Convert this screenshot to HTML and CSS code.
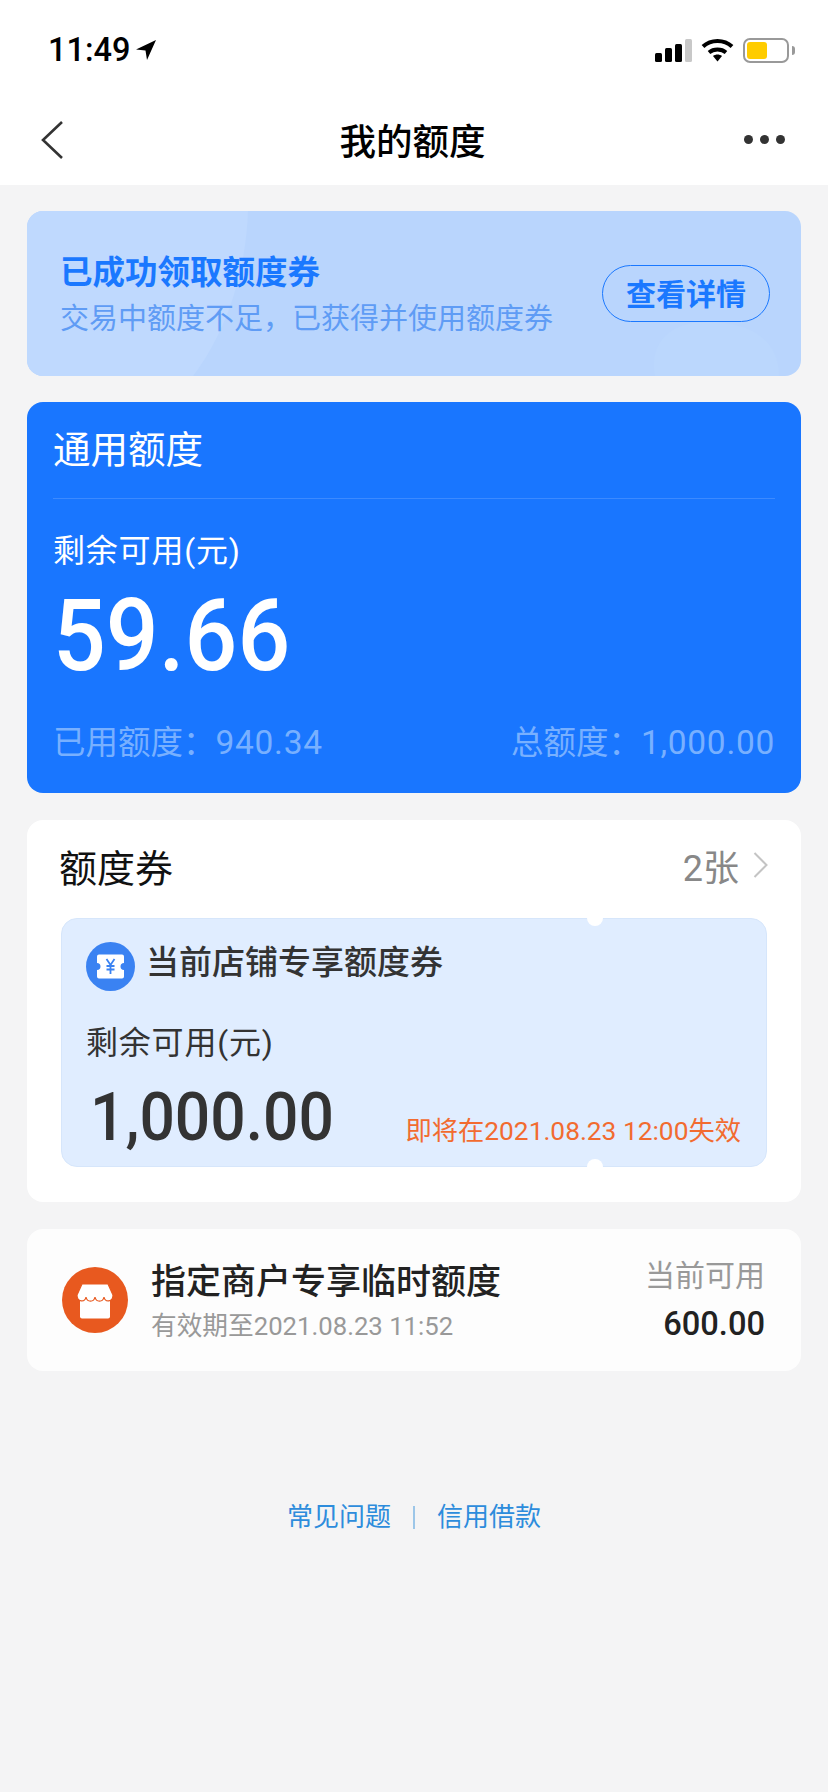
FILE: index.html
```html
<!DOCTYPE html>
<html lang="zh-CN">
<head>
    <meta charset="UTF-8">
    <meta name="viewport" content="width=device-width, initial-scale=1.0">
    <title>我的额度</title>
    <link rel="stylesheet" href="styles.css">
</head>
<body>

    <header class="top">
        <div class="status-bar">
            <div class="time">
                <span>11:49</span>
                <svg class="arrow" width="22" height="22" viewBox="0 0 22 22"><path d="M21 1 L1 10.5 L10.5 11.5 L12 21 Z" fill="#000"/></svg>
            </div>
            <div class="status-icons">
                <div class="signal">
                    <i class="bar-1"></i><i class="bar-2"></i><i class="bar-3"></i><i class="bar-4"></i>
                </div>
                <svg class="wifi" width="33" height="24" viewBox="0 0 33 24">
                    <path d="M2 8.5 C10 1 23 1 31 8.5" fill="none" stroke="#000" stroke-width="4"/>
                    <path d="M8 14.5 C12.500 10.500 20.500 10.500 25 14.500" fill="none" stroke="#000" stroke-width="3.800"/>
                    <path d="M12 18 L16.500 23.500 L21 18 C18.500 16 14.500 16 12 18 Z" fill="#000"/>
                </svg>
                <div class="battery"><div class="battery-level"></div></div>
                <div class="battery-nub"></div>
            </div>
        </div>
        <nav class="nav-bar">
            <div class="nav-side">
                <svg width="24" height="38" viewBox="0 0 24 38"><path d="M22 1 L3 19 L22 37" fill="none" stroke="#333" stroke-width="2.6"/></svg>
            </div>
            <h1>我的额度</h1>
            <div class="nav-side more"><i></i><i></i><i></i></div>
        </nav>
    </header>

    <main class="content">
        <section class="banner">
            <svg class="banner-bg" width="774" height="165" viewBox="0 0 774 165">
                <path d="M0 0 H221 C219 60 200 120 166 165 H0 Z" fill="#bfd9fe"/>
                <path d="M628 165 C622 135 640 111 680 111 C725 111 752 130 752 165 Z" fill="#bbd7fd"/>
            </svg>
            <div class="banner-text">
                <div class="banner-title">已成功领取额度券</div>
                <div class="banner-sub">交易中额度不足&#xFF0C;已获得并使用额度券</div>
            </div>
            <a class="banner-btn">查看详情</a>
        </section>

        <section class="quota">
            <div class="quota-title">通用额度</div>
            <div class="quota-label">剩余可用(元)</div>
            <div class="quota-amount">59.66</div>
            <div class="quota-foot">
                <span>已用额度&#xFF1A;<em>940.34</em></span>
                <span>总额度&#xFF1A;<em>1,000.00</em></span>
            </div>
        </section>

        <section class="coupons">
            <div class="coupons-head">
                <h2>额度券</h2>
                <div class="coupons-count">
                    <span>2张</span>
                    <svg width="15" height="26" viewBox="0 0 15 26"><path d="M1.5 1 L13.5 13 L1.5 25" fill="none" stroke="#c4c4c4" stroke-width="2"/></svg>
                </div>
            </div>
            <div class="ticket">
                <div class="ticket-head">
                    <svg width="49" height="49" viewBox="0 0 49 49">
                        <circle cx="24.5" cy="24.5" r="24.5" fill="#3a82f2"/>
                        <path d="M13 12.5 H36 Q38 12.5 38 14.5 V21 A3.5 3.5 0 0 0 38 28 V34.5 Q38 36.5 36 36.5 H13 Q11 36.5 11 34.5 V28 A3.5 3.5 0 0 0 11 21 V14.5 Q11 12.5 13 12.5 Z" fill="#fff"/>
                        <path d="M20.500 17 L24.500 23 L28.500 17 M24.500 23 V32 M20.500 24 H28.500 M20.500 27.500 H28.500" fill="none" stroke="#3a82f2" stroke-width="1.8"/>
                    </svg>
                    <span>当前店铺专享额度券</span>
                </div>
                <div class="ticket-label">剩余可用(元)</div>
                <div class="ticket-foot">
                    <div class="ticket-amount">1,000.00</div>
                    <div class="ticket-expire">即将在2021.08.23 12:00失效</div>
                </div>
            </div>
        </section>

        <section class="merchant">
            <svg width="66" height="66" viewBox="0 0 66 66">
                <circle cx="33" cy="33" r="33" fill="#e8591f"/>
                <path d="M18 30 H48 V49.500 Q48 51.500 46 51.500 H20 Q18 51.500 18 49.500 Z" fill="#fff"/>
                <path d="M20 17 H46 L51 28 C51 35.500 43 35.500 42 30 C41 35.500 34 35.500 33 30 C32 35.500 25 35.500 24 30 C23 35.500 15 35.500 15 28 Z" fill="#fff" stroke="#e8591f" stroke-width="1.2"/>
            </svg>
            <div class="merchant-info">
                <div class="merchant-title">指定商户专享临时额度</div>
                <div class="merchant-sub">有效期至2021.08.23 11:52</div>
            </div>
            <div class="merchant-side">
                <div class="merchant-label">当前可用</div>
                <div class="merchant-amount">600.00</div>
            </div>
        </section>

        <footer class="links">
            <a>常见问题</a>
            <i></i>
            <a>信用借款</a>
        </footer>
    </main>

</body>
</html>
```

FILE: styles.css
```css
* {
    box-sizing: border-box;
}

html, body {
    margin: 0;
    padding: 0;
}

body {
    width: 828px;
    min-height: 1792px;
    background-color: #f4f4f5;
    font-family: Roboto, "Noto Sans CJK SC", sans-serif;
    color: #222;
}

/* Topo */
.top {
    height: 185px;
    background: #fff;
}

.status-bar {
    height: 88px;
    padding: 30px 33px 0 48px;
    display: flex;
    justify-content: space-between;
    align-items: flex-start;
}

.time {
    display: flex;
    align-items: center;
    gap: 5px;
    height: 40px;
    font-size: 32.500px;
    font-weight: 500;
    color: #000;
}

.status-icons {
    display: flex;
    align-items: center;
    height: 40px;
}

.signal {
    display: flex;
    align-items: flex-end;
    gap: 3px;
    height: 23px;
    margin-right: 9px;
}

.signal i {
    width: 7px;
    border-radius: 1.500px;
    background: #000;
}

.bar-1 { height: 9px; }
.bar-2 { height: 14px; }
.bar-3 { height: 18px; }
.signal .bar-4 { height: 23px; background: #c8c8c8; }

.wifi {
    margin-right: 9px;
}

.battery {
    width: 46px;
    height: 25px;
    border: 2px solid #999;
    border-radius: 7px;
    padding: 2px;
}

.battery-level {
    width: 20px;
    height: 17px;
    border-radius: 3px;
    background: #ffcc00;
}

.battery-nub {
    width: 3px;
    height: 9px;
    margin-left: 3px;
    border-radius: 0 3px 3px 0;
    background: #999;
}

.nav-bar {
    height: 97px;
    padding: 6px 43px 0 40px;
    display: flex;
    justify-content: space-between;
    align-items: center;
}

.nav-side {
    width: 120px;
    display: flex;
}

.nav-bar h1 {
    margin: 0;
    font-size: 36.500px;
    font-weight: 500;
    color: #000;
}

.more {
    justify-content: flex-end;
    gap: 7px;
}

.more i {
    width: 9px;
    height: 9px;
    border-radius: 50%;
    background: #333;
}

/* Conteudo */
.content {
    padding: 26px 27px 0;
    display: flex;
    flex-direction: column;
    gap: 26px;
}

.banner {
    position: relative;
    height: 165px;
    padding: 0 31px 0 33px;
    border-radius: 16px;
    overflow: hidden;
    background: #b9d5fd;
    display: flex;
    justify-content: space-between;
    align-items: center;
}

.banner-bg {
    position: absolute;
    top: 0;
    left: 0;
}

.banner-text, .banner-btn {
    position: relative;
}

.banner-text {
    margin-top: 2px;
}

.banner-title {
    font-size: 32.500px;
    font-weight: 700;
    line-height: 44px;
    color: #1a78ff;
}

.banner-sub {
    margin-top: 4px;
    font-size: 29px;
    line-height: 40px;
    color: #5f9cf5;
}

.banner-btn {
    width: 168px;
    height: 57px;
    padding-bottom: 3px;
    border: 1px solid #1a78ff;
    border-radius: 29px;
    display: flex;
    justify-content: center;
    align-items: center;
    font-size: 30px;
    font-weight: 700;
    color: #1a78ff;
}

.quota {
    height: 391px;
    padding: 0 26px;
    border-radius: 16px;
    background: #1976ff;
    color: #fff;
}

.quota-title {
    height: 97px;
    padding-top: 20px;
    border-bottom: 1px solid #3c8aff;
    font-size: 37.500px;
    line-height: 56px;
}

.quota-label {
    margin-top: 29px;
    font-size: 32px;
    line-height: 46px;
    letter-spacing: 0.800px;
}

/* Numeros estreitos, parecidos com DIN */
.quota-amount {
    margin-top: 8px;
    height: 108px;
    font-size: 100px;
    font-weight: 500;
    line-height: 108px;
    transform: scaleX(0.93);
    transform-origin: left center;
}

.quota-foot {
    margin-top: 31px;
    display: flex;
    justify-content: space-between;
    font-size: 32.500px;
    line-height: 44px;
    color: #78b0ff;
}

.quota-foot em {
    font-style: normal;
    font-size: 33.500px;
    letter-spacing: 0.700px;
}

.coupons {
    height: 382px;
    margin-top: 1px;
    padding: 0 33px 0 34px;
    border-radius: 16px;
    background: #fff;
}

.coupons-head {
    height: 98px;
    padding-bottom: 8px;
    display: flex;
    justify-content: space-between;
    align-items: center;
}

.coupons-head h2 {
    margin: 0 0 0 -2px;
    font-size: 38px;
    font-weight: 400;
    color: #111;
}

.coupons-count {
    display: flex;
    align-items: center;
    gap: 14px;
    font-size: 36px;
    color: #888;
}

.ticket {
    position: relative;
    width: 706px;
    height: 249px;
    padding: 23px 25px 0 24px;
    border: 1px solid #d6e6fb;
    border-radius: 16px;
    background: #e0edff;
}

/* Furos do cupom */
.ticket::before, .ticket::after {
    content: "";
    position: absolute;
    left: 525px;
    width: 16px;
    height: 16px;
    border-radius: 50%;
    background: #fff;
}

.ticket::before { top: -9px; }
.ticket::after { bottom: -9px; }

.ticket-head {
    display: flex;
    align-items: flex-start;
    gap: 11px;
    font-size: 33px;
    font-weight: 500;
    line-height: 42px;
    color: #333;
}

.ticket-label {
    margin-top: 29px;
    font-size: 32px;
    line-height: 46px;
    letter-spacing: 0.800px;
    color: #333;
}

.ticket-foot {
    margin-top: 13px;
    display: flex;
    justify-content: space-between;
    align-items: flex-end;
}

.ticket-amount {
    margin-left: 4px;
    font-size: 66px;
    line-height: 78px;
    font-weight: 500;
    color: #333;
    transform: scaleX(0.945);
    transform-origin: left center;
}

.ticket-expire {
    font-size: 26.300px;
    line-height: 38px;
    margin-bottom: 7px;
    color: #f26b30;
}

.merchant {
    height: 142px;
    margin-top: 1px;
    padding: 0 36px 0 35px;
    border-radius: 16px;
    background: #fdfdfd;
    display: flex;
    align-items: center;
    gap: 23px;
}

.merchant-info {
    flex: 1;
    padding-top: 2px;
}

.merchant-title {
    margin-top: 2px;
    font-size: 35px;
    font-weight: 500;
    line-height: 48px;
    color: #222;
}

.merchant-sub {
    font-size: 25.700px;
    line-height: 38px;
    color: #999;
}

.merchant-side {
    text-align: right;
}

.merchant-label {
    font-size: 30px;
    line-height: 44px;
    color: #999;
}

.merchant-amount {
    margin-top: 2px;
    font-size: 34px;
    line-height: 46px;
    font-weight: 500;
    color: #222;
    transform: scaleX(0.96);
    transform-origin: right center;
}

.links {
    margin-top: 101px;
    display: flex;
    justify-content: center;
    align-items: center;
    gap: 22px;
    font-size: 26px;
    line-height: 38px;
    color: #2d8cdc;
}

.links i {
    width: 2px;
    height: 23px;
    background: #9cc6e8;
}
```
